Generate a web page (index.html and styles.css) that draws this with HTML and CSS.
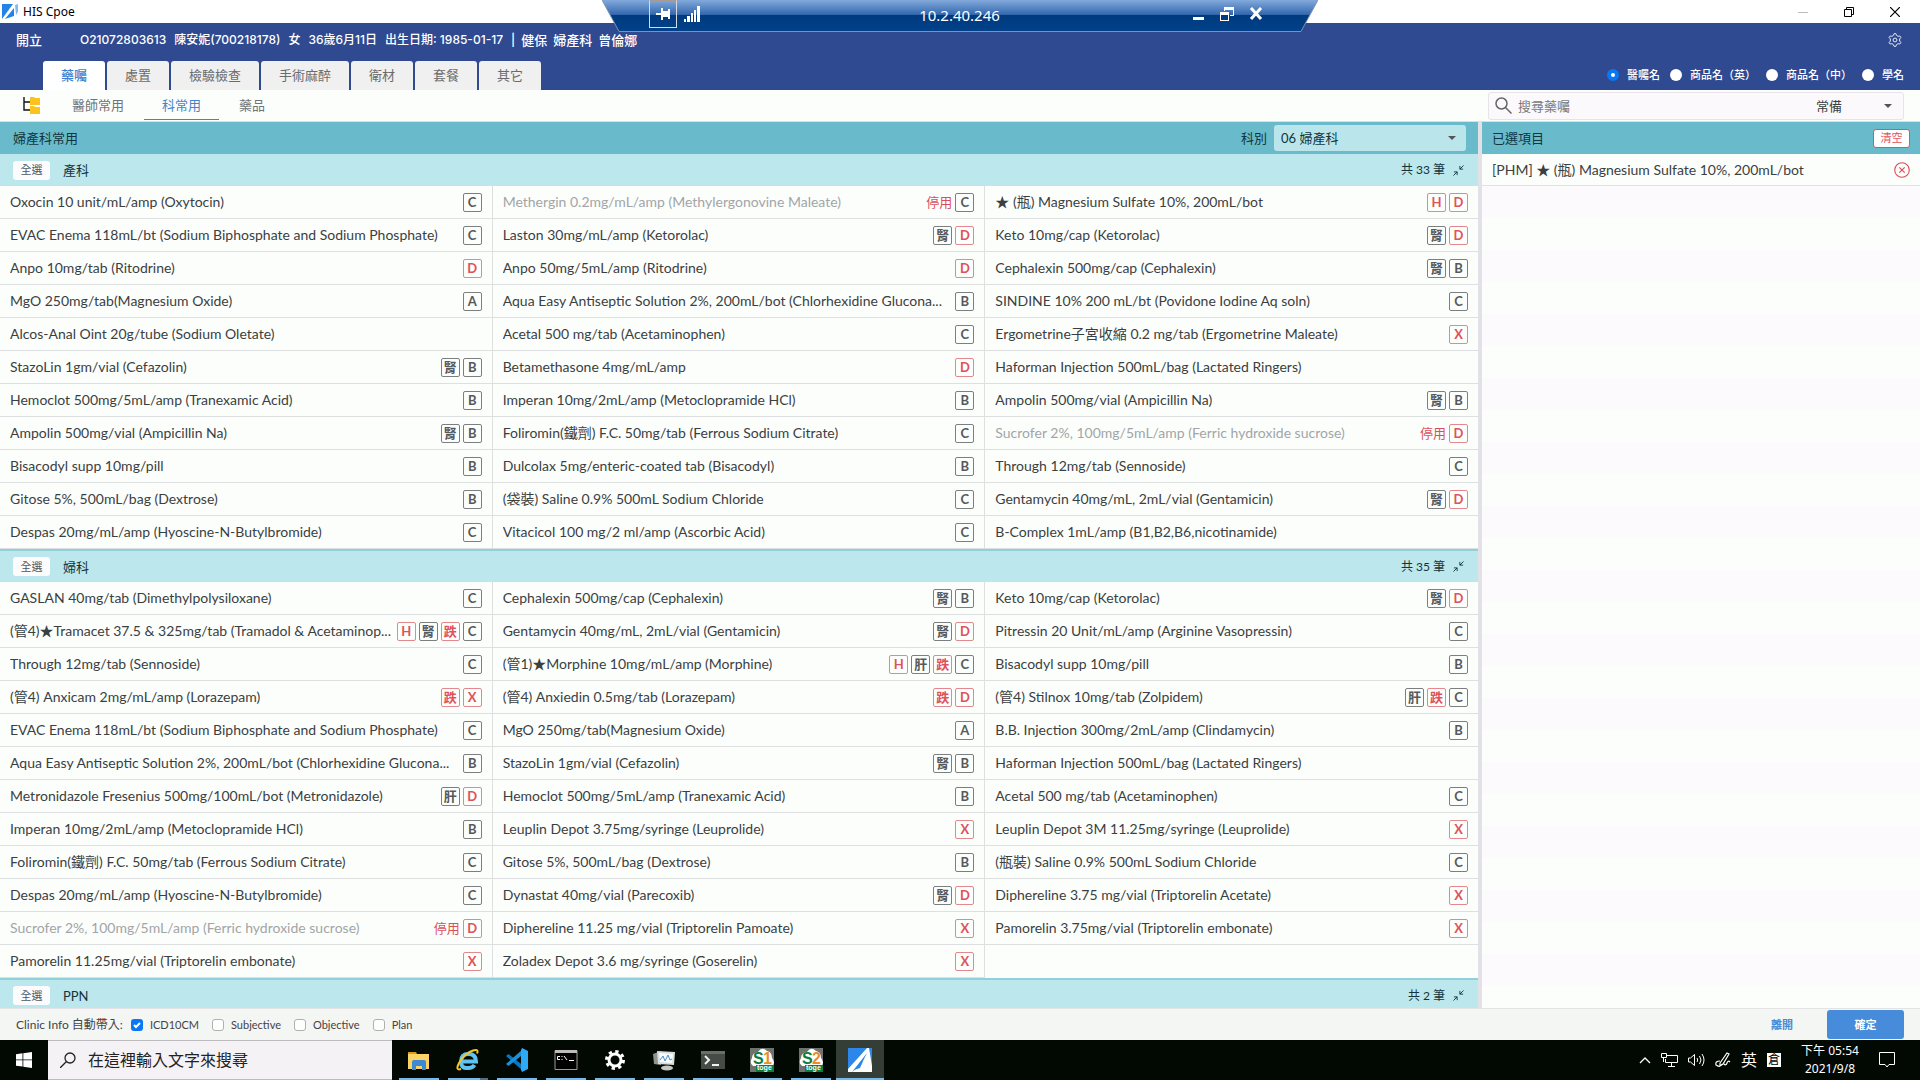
FILE: index.html
```html
<!DOCTYPE html>
<html lang="zh-Hant">
<head>
<meta charset="utf-8">
<title>HIS Cpoe</title>
<link rel="stylesheet" href="styles.css">
</head>
<body>
<div class="titlebar">
  <svg class="app-logo" viewBox="0 0 16 16"><path fill="#2383e8" d="M0 0h11L0 15z"/><path fill="#2383e8" d="M3 15L12 4v8z"/><path fill="#7cbcf5" d="M13 1l3-1v8l-2 3z"/></svg>
  <span class="app-name">HIS Cpoe</span>
  <div class="win-controls">
    <button class="win-btn" aria-label="最小化"><svg viewBox="0 0 10 10"><path stroke="#bbb" d="M0 5.500h10"/></svg></button>
    <button class="win-btn" aria-label="還原"><svg viewBox="0 0 10 10"><path fill="none" stroke="#000" d="M.5 2.500h7v7h-7zM2.500 2.500v-2h7v7h-2"/></svg></button>
    <button class="win-btn" aria-label="關閉"><svg viewBox="0 0 10 10"><path stroke="#000" stroke-width="1.200" d="M0 0l10 10M10 0L0 10"/></svg></button>
  </div>
</div>

<div class="remote-bar">
  <svg class="remote-shape" viewBox="0 0 716 32">
    <defs><linearGradient id="glass" x2="0" y2="1"><stop offset="0" stop-color="#82aadc"/><stop offset=".46" stop-color="#3468ae"/><stop offset=".47" stop-color="#003a7e"/><stop offset="1" stop-color="#00428a"/></linearGradient></defs>
    <path d="M0 0L17 31.500H699L716 0z" fill="url(#glass)"/>
    <path d="M0 0L17 31.500H699L716 0" fill="none" stroke="#7d93b0"/>
  </svg>
  <div class="remote-content">
    <button class="remote-pin" aria-label="釘選"><svg viewBox="0 0 14 14" width="14" height="14"><path fill="#fff" d="M0 6h5V1h2v3h5V2h2v10h-2v-2H7v3H5V8H0z"/></svg></button>
    <svg class="signal" viewBox="0 0 16 16"><path fill="#fff" d="M0 13h2v3H0zM3 10h3v6H3zM7 7h2v9H7zM10 4h2v12h-2zM13 0h3v16h-3z"/></svg>
    <span class="remote-ip">10.2.40.246</span>
    <button class="remote-btn" aria-label="最小化"><svg viewBox="0 0 14 14"><path fill="#fff" d="M2 10h11v3H2z"/></svg></button>
    <button class="remote-btn" aria-label="還原"><svg viewBox="0 0 14 14"><path fill="#fff" d="M4 0h10v9h-4V8h3V3H5v1H4zM0 5h9v9H0zm1 3v5h7V8z" fill-rule="evenodd"/></svg></button>
    <button class="remote-btn" aria-label="關閉"><svg viewBox="0 0 14 14"><path stroke="#fff" stroke-width="3" d="M2 1l10 11M12 1L2 12"/></svg></button>
  </div>
</div>

<header class="header">
  <div class="patient">
    <span class="mode">開立</span>
    <span class="patient-info"><span>O21072803613</span><span>陳安妮(700218178)</span><span>女</span><span>36歲6月11日</span><span>出生日期: 1985-01-17</span><span>|</span><span>健保</span><span>婦產科</span><span>曾倫娜</span></span>
    <button class="gear" aria-label="設定"><svg viewBox="0 0 16 16"><g fill="none" stroke="#e8ecf8" stroke-width="1.100"><path d="M6.300 2.700L6.900.8h2.200l.6 1.900 1.900 1.100 2-.4 1.100 1.900-1.400 1.500v2.400l1.400 1.500-1.100 1.900-2-.4-1.900 1.100-.6 1.900H6.900l-.6-1.900-1.900-1.100-2 .4-1.100-1.900 1.400-1.500V6.800L1.300 5.300l1.100-1.900 2 .4z"/><circle cx="8" cy="8" r="2.200"/></g></svg></button>
  </div>
  <div class="header-tabs">
    <nav class="tabs">
      <a href="#" class="tab active">藥囑</a><a href="#" class="tab">處置</a><a href="#" class="tab">檢驗檢查</a><a href="#" class="tab">手術麻醉</a><a href="#" class="tab">衛材</a><a href="#" class="tab">套餐</a><a href="#" class="tab">其它</a>
    </nav>
    <div class="name-options">
      <label><input type="radio" name="nm" checked>醫囑名</label>
      <label><input type="radio" name="nm">商品名（英）</label>
      <label><input type="radio" name="nm">商品名（中）</label>
      <label><input type="radio" name="nm">學名</label>
    </div>
  </div>
</header>

<div class="subbar">
  <svg class="tree-icon" viewBox="0 0 18 17"><path fill="none" stroke="#111" stroke-width="1.400" d="M1 0v13h6M1 5h6"/><path fill="#fcc21f" d="M7 0h4l1 1h5v7H7zM7 9h4l1 1h5v7H7z"/></svg>
  <nav class="subtabs"><a href="#" class="subtab">醫師常用</a><a href="#" class="subtab active">科常用</a><a href="#" class="subtab">藥品</a></nav>
  <div class="search">
    <svg class="search-icon" viewBox="0 0 17 17"><circle cx="6.500" cy="6.500" r="5.500" fill="none" stroke="#666" stroke-width="1.500"/><path stroke="#666" stroke-width="1.500" d="M10.500 10.500l6 6"/></svg>
    <input class="search-input" type="text" placeholder="搜尋藥囑" aria-label="搜尋藥囑">
    <select class="stock" aria-label="庫別"><option>常備</option></select>
  </div>
</div>

<main class="main">
  <section class="orders">
    <div class="bar">
      <span>婦產科常用</span>
      <div class="dept"><label for="dept">科別</label><select id="dept" class="dept-select"><option>06 婦產科</option></select></div>
    </div>
    <div class="groups" id="groups"></div>
  </section>
  <aside class="selected">
    <div class="bar"><span>已選項目</span><button class="clear">清空</button></div>
    <div class="selected-list">
      <div class="selected-item"><span>[PHM] ★ (瓶) Magnesium Sulfate 10%, 200mL/bot</span>
        <button class="remove" aria-label="移除"><svg viewBox="0 0 16 16"><g fill="none" stroke="#dc4a54" stroke-width="1.100"><circle cx="8" cy="8" r="7.300"/><path d="M5.300 5.300l5.400 5.400M10.700 5.300l-5.400 5.400"/></g></svg></button></div>
    </div>
  </aside>
</main>

<footer class="footer">
  <span>Clinic Info 自動帶入:</span>
  <label><input type="checkbox" checked>ICD10CM</label>
  <label><input type="checkbox">Subjective</label>
  <label><input type="checkbox">Objective</label>
  <label><input type="checkbox">Plan</label>
  <div class="actions"><button class="leave">離開</button><button class="confirm">確定</button></div>
</footer>

<div class="taskbar">
  <button class="start" aria-label="開始"><svg viewBox="0 0 16 16"><path fill="#fff" d="M0 2.200l6.500-.9v6.200H0zM7.300 1.200L16 0v7.500H7.300zM0 8.300h6.500v6.200L0 13.700zM7.300 8.300H16V16l-8.700-1.300z"/></svg></button>
  <label class="task-search"><svg viewBox="0 0 16 16"><circle cx="10" cy="6" r="5" fill="none" stroke="#222" stroke-width="1.300"/><path stroke="#222" stroke-width="1.300" d="M6.500 9.500L0 16"/></svg><input type="text" placeholder="在這裡輸入文字來搜尋" aria-label="在這裡輸入文字來搜尋"></label>
  <div class="apps">
    <button class="app" aria-label="檔案總管"><svg viewBox="0 0 24 24"><path fill="#d99a1f" d="M1 4h8l1 2h11v3H1z"/><path fill="#fbd265" d="M1 6h21v15H1z"/><path fill="#3b8ad2" d="M5 14q0-2 2-2h10q2 0 2 2v8h-4v-4H9v4H5z"/></svg></button>
    <button class="app split" aria-label="Internet Explorer"><svg viewBox="0 0 24 24"><path fill="none" stroke="#5ec5f2" stroke-width="4" d="M5 13.500h15Q20 6 12.500 6T5 13.500 12.500 20q4 0 6-3"/><path fill="none" stroke="#f5c52a" stroke-width="2" d="M5 21Q-1 23 3 15 9 5 17 2.500q6-2 4 3"/></svg></button>
    <button class="app" aria-label="Visual Studio Code"><svg viewBox="0 0 24 24"><path fill="#0b75bd" d="M1 8l2.500-2L18 17.500V23z"/><path fill="#1a8fdc" d="M1 16l2.500 2L18 6.500V1z"/><path fill="#2fa8f5" d="M17 0l6 3v18l-6 3-1-2V2z"/></svg></button>
    <button class="app" aria-label="命令提示字元"><svg viewBox="0 0 24 24"><path fill="#000" stroke="#999" d="M1 2.500h22v19H1z"/><path fill="#bbb" d="M1 2h22v3H1z"/><path fill="none" stroke="#fff" d="M6 8.500H3.500v3H6M8 8v1m0 2v1M10 8l3 4M15 12.500h5"/></svg></button>
    <button class="app" aria-label="設定"><svg viewBox="0 0 24 24"><circle cx="12" cy="12" r="6" fill="none" stroke="#fff" stroke-width="3"/><circle cx="12" cy="12" r="8.500" fill="none" stroke="#fff" stroke-width="3" stroke-dasharray="3.300 3.376"/></svg></button>
    <button class="app" aria-label="監視器"><svg viewBox="0 0 24 24"><path fill="#8d938f" d="M1 6l8-3v14l-7-1z"/><path fill="#d9dedb" d="M5 3l18 1-1 13-16-1z"/><path fill="#f7fbfd" d="M7 5l14 1-1 9-12-1z"/><path fill="none" stroke="#4a8ec4" d="M8 12l3-4 2 5 3-6 2 5 2-1"/><ellipse cx="15" cy="20" rx="6" ry="2.500" fill="#c4c9c6"/></svg></button>
    <button class="app" aria-label="終端機"><svg viewBox="0 0 24 24"><path fill="#474b48" d="M0 3h24v18H0z"/><path fill="#6a6e6b" d="M0 3h24v3H0z"/><path fill="none" stroke="#f0f0f0" stroke-width="2" d="M4 8l4 4-4 4M11 17h7"/></svg></button>
    <button class="app" aria-label="S1 toge"><svg viewBox="0 0 24 24"><path fill="#6f7370" d="M0 0h24v24H0z"/><path fill="#fff" d="M3 18q-4-3-1-8 0-5 6-6 4-6 9-1 5 1 5 7 4 5 0 8z"/><text x="3" y="16" class="s-letter">S</text><text x="13" y="16" class="s-digit">1</text><path fill="#0b7d3e" d="M6 17h18v7H6z"/><text x="7" y="22" class="s-word">toge</text></svg></button>
    <button class="app" aria-label="S2 toge"><svg viewBox="0 0 24 24"><path fill="#6f7370" d="M0 0h24v24H0z"/><path fill="#fff" d="M3 18q-4-3-1-8 0-5 6-6 4-6 9-1 5 1 5 7 4 5 0 8z"/><text x="3" y="16" class="s-letter">S</text><text x="13" y="16" class="s-digit">2</text><path fill="#0b7d3e" d="M6 17h18v7H6z"/><text x="7" y="22" class="s-word">toge</text></svg></button>
    <button class="app current" aria-label="HIS Cpoe"><svg viewBox="0 0 24 24"><path fill="#2d86ea" d="M0 0h24v24H0z"/><path fill="#fff" d="M19 0L0 21v3h4L19 5l-6 12-9 7h20V18L21 0z"/><path fill="#2d86ea" d="M22 0h2v14zM6 22l9-9-3 7z"/></svg></button>
  </div>
  <div class="tray">
    <svg viewBox="0 0 12 16" width="12" height="16"><path fill="none" stroke="#fff" stroke-width="1.300" d="M1 11l5-5 5 5"/></svg>
    <svg viewBox="0 0 17 16" width="17" height="16"><path fill="none" stroke="#fff" d="M6 3.500h10.500v7H4.500V7M7 14.500h7M10.500 11v3M.5 1.500h5v4h-5zM2.500 6v4"/></svg>
    <svg viewBox="0 0 17 16" width="17" height="16"><path fill="none" stroke="#fff" d="M.5 6h2l4-3.500v11L2.500 10h-2zM9 6q1.500 2 0 4M11.500 4q3 4 0 8M14 2q4 6 0 12"/></svg>
    <svg viewBox="0 0 16 16" width="16" height="16"><path fill="none" stroke="#fff" stroke-width="1.200" d="M5 11L12 1l2 1-6 10-3 2zM5 9q-5 0-4 4 4 3 6-1M9 12q2 2 3-1t3-1"/></svg>
    <span class="ime">英</span>
    <span class="ime-mode">倉</span>
    <div class="clock"><span>下午 05:54</span><span>2021/9/8</span></div>
    <svg viewBox="0 0 16 16" width="16" height="16"><path fill="none" stroke="#fff" d="M.5.5h15v12H10L8 15l-2-2.500H.5z"/></svg>
  </div>
</div>
<script src="script.js"></script>
</body>
</html>
```
FILE: script.js
```js
// Each entry: "name|tags". Tags: A B C D X = pregnancy class, H = high alert, 停用 = discontinued.
const groups = [
  { name: "產科", count: 33, items: [
    "Oxocin 10 unit/mL/amp (Oxytocin)|C",
    "Methergin 0.2mg/mL/amp (Methylergonovine Maleate)|停用 C",
    "★ (瓶) Magnesium Sulfate 10%, 200mL/bot|H D",
    "EVAC Enema 118mL/bt (Sodium Biphosphate and Sodium Phosphate)|C",
    "Laston 30mg/mL/amp (Ketorolac)|腎 D",
    "Keto 10mg/cap (Ketorolac)|腎 D",
    "Anpo 10mg/tab (Ritodrine)|D",
    "Anpo 50mg/5mL/amp (Ritodrine)|D",
    "Cephalexin 500mg/cap (Cephalexin)|腎 B",
    "MgO 250mg/tab(Magnesium Oxide)|A",
    "Aqua Easy Antiseptic Solution 2%, 200mL/bot (Chlorhexidine Glucona...|B",
    "SINDINE 10% 200 mL/bt (Povidone Iodine Aq soln)|C",
    "Alcos-Anal Oint 20g/tube (Sodium Oletate)|",
    "Acetal 500 mg/tab (Acetaminophen)|C",
    "Ergometrine子宮收縮 0.2 mg/tab (Ergometrine Maleate)|X",
    "StazoLin 1gm/vial (Cefazolin)|腎 B",
    "Betamethasone 4mg/mL/amp|D",
    "Haforman Injection 500mL/bag (Lactated Ringers)|",
    "Hemoclot 500mg/5mL/amp (Tranexamic Acid)|B",
    "Imperan 10mg/2mL/amp (Metoclopramide HCl)|B",
    "Ampolin 500mg/vial (Ampicillin Na)|腎 B",
    "Ampolin 500mg/vial (Ampicillin Na)|腎 B",
    "Foliromin(鐵劑) F.C. 50mg/tab (Ferrous Sodium Citrate)|C",
    "Sucrofer 2%, 100mg/5mL/amp (Ferric hydroxide sucrose)|停用 D",
    "Bisacodyl supp 10mg/pill|B",
    "Dulcolax 5mg/enteric-coated tab (Bisacodyl)|B",
    "Through 12mg/tab (Sennoside)|C",
    "Gitose 5%, 500mL/bag (Dextrose)|B",
    "(袋裝) Saline 0.9% 500mL Sodium Chloride|C",
    "Gentamycin 40mg/mL, 2mL/vial (Gentamicin)|腎 D",
    "Despas 20mg/mL/amp (Hyoscine-N-Butylbromide)|C",
    "Vitacicol 100 mg/2 ml/amp (Ascorbic Acid)|C",
    "B-Complex 1mL/amp (B1,B2,B6,nicotinamide)|"
  ]},
  { name: "婦科", count: 35, items: [
    "GASLAN 40mg/tab (Dimethylpolysiloxane)|C",
    "Cephalexin 500mg/cap (Cephalexin)|腎 B",
    "Keto 10mg/cap (Ketorolac)|腎 D",
    "(管4)★Tramacet 37.5 & 325mg/tab (Tramadol & Acetaminop...|H 腎 跌 C",
    "Gentamycin 40mg/mL, 2mL/vial (Gentamicin)|腎 D",
    "Pitressin 20 Unit/mL/amp (Arginine Vasopressin)|C",
    "Through 12mg/tab (Sennoside)|C",
    "(管1)★Morphine 10mg/mL/amp (Morphine)|H 肝 跌 C",
    "Bisacodyl supp 10mg/pill|B",
    "(管4) Anxicam 2mg/mL/amp (Lorazepam)|跌 X",
    "(管4) Anxiedin 0.5mg/tab (Lorazepam)|跌 D",
    "(管4) Stilnox 10mg/tab (Zolpidem)|肝 跌 C",
    "EVAC Enema 118mL/bt (Sodium Biphosphate and Sodium Phosphate)|C",
    "MgO 250mg/tab(Magnesium Oxide)|A",
    "B.B. Injection 300mg/2mL/amp (Clindamycin)|B",
    "Aqua Easy Antiseptic Solution 2%, 200mL/bot (Chlorhexidine Glucona...|B",
    "StazoLin 1gm/vial (Cefazolin)|腎 B",
    "Haforman Injection 500mL/bag (Lactated Ringers)|",
    "Metronidazole Fresenius 500mg/100mL/bot (Metronidazole)|肝 D",
    "Hemoclot 500mg/5mL/amp (Tranexamic Acid)|B",
    "Acetal 500 mg/tab (Acetaminophen)|C",
    "Imperan 10mg/2mL/amp (Metoclopramide HCl)|B",
    "Leuplin Depot 3.75mg/syringe (Leuprolide)|X",
    "Leuplin Depot 3M 11.25mg/syringe (Leuprolide)|X",
    "Foliromin(鐵劑) F.C. 50mg/tab (Ferrous Sodium Citrate)|C",
    "Gitose 5%, 500mL/bag (Dextrose)|B",
    "(瓶裝) Saline 0.9% 500mL Sodium Chloride|C",
    "Despas 20mg/mL/amp (Hyoscine-N-Butylbromide)|C",
    "Dynastat 40mg/vial (Parecoxib)|腎 D",
    "Diphereline 3.75 mg/vial (Triptorelin Acetate)|X",
    "Sucrofer 2%, 100mg/5mL/amp (Ferric hydroxide sucrose)|停用 D",
    "Diphereline 11.25 mg/vial (Triptorelin Pamoate)|X",
    "Pamorelin 3.75mg/vial (Triptorelin embonate)|X",
    "Pamorelin 11.25mg/vial (Triptorelin embonate)|X",
    "Zoladex Depot 3.6 mg/syringe (Goserelin)|X"
  ]},
  { name: "PPN", count: 2, items: [] }
];

const warning = new Set(["D", "X", "H", "跌"]);
const esc = s => s.replace(/&/g, "&amp;");

function tag(t) {
  if (t === "停用") return '<span class="stopped">停用</span>';
  return `<span class="tag${warning.has(t) ? " warn" : ""}">${t}</span>`;
}

function item(entry) {
  const [name, tags] = entry.split("|");
  const list = tags ? tags.split(" ") : [];
  const off = list.includes("停用") ? " off" : "";
  return `<li class="drug${off}"><span class="drug-name">${esc(name)}</span>${list.map(tag).join("")}</li>`;
}

const collapseIcon = '<svg viewBox="0 0 12 12"><path fill="none" stroke="#12343c" d="M11.500.5l-4 4M7.500 1v3.500H11M.5 11.500l4-4M1 7.500h3.500V11"/></svg>';

document.getElementById("groups").innerHTML = groups.map(g => `
  <section class="group">
    <div class="group-head">
      <button class="pick-all">全選</button><h2>${g.name}</h2>
      <span class="count">共 ${g.count} 筆</span><button class="collapse" aria-label="收合">${collapseIcon}</button>
    </div>
    <ul class="drugs">${g.items.map(item).join("")}</ul>
  </section>`).join("");
```
FILE: styles.css
```css
* { box-sizing: border-box; }
body {
  margin: 0;
  height: 100vh;
  display: flex;
  flex-direction: column;
  overflow: hidden;
  font: 13px/18px Lato, "Noto Sans CJK TC", sans-serif;
  color: #3a3f42;
  background: #fcfefc;
}
button, input, select { font: inherit; color: inherit; margin: 0; padding: 0; }
button { border: 0; background: none; display: flex; align-items: center; justify-content: center; }
a { color: inherit; text-decoration: none; }
svg { display: block; flex: none; }

.titlebar { flex: none; height: 23px; display: flex; align-items: center; gap: 5px; padding-left: 2px; color: #000; background: #fff; }
.app-logo { width: 16px; height: 16px; }
.app-name { font: 12px/18px "Noto Sans", sans-serif; }
.win-controls { margin-left: auto; display: flex; padding-right: 2px; }
.win-btn { width: 46px; height: 20px; }
.win-btn svg { width: 10px; height: 10px; }

.remote-bar { position: absolute; top: 0; left: 50%; width: 716px; height: 32px; transform: translateX(-50%); color: #fff; }
.remote-shape { position: absolute; top: 0; left: 0; width: 100%; height: 100%; }
.remote-content { position: relative; height: 100%; display: flex; align-items: center; padding: 0 48px 4px 47px; }
.remote-pin { width: 28px; height: 28px; border: 1px solid #d5dbe6; border-top-color: #a89a94; }
.signal { width: 16px; height: 16px; margin-left: 7px; }
.remote-ip { flex: 1; padding: 2px 0 0 36px; text-align: center; font: 15px/20px "Noto Sans", sans-serif; }
.remote-btn { width: 29px; height: 28px; }
.remote-btn svg { width: 14px; height: 14px; }

.header { flex: none; height: 67px; display: flex; flex-direction: column; justify-content: space-between; background: #2f4a91; color: #fff; }
.patient { height: 34px; display: flex; align-items: center; padding: 0 18px 0 16px; font-weight: 500; }
.mode { width: 64px; }
.patient-info { display: flex; gap: 6px; font-family: Inter, "Noto Sans CJK TC", sans-serif; font-size: 12px; }
.patient-info span:nth-child(-n+5) { margin-right: 2px; }
.patient-info span:nth-last-child(-n+3) { font-size: 13px; }
.gear { margin-left: auto; width: 14px; height: 14px; }
.gear svg { width: 14px; height: 14px; }
.header-tabs { display: flex; justify-content: space-between; padding: 0 16px 0 43px; }
.tabs { display: flex; gap: 2px; }
.tab { height: 29px; padding: 0 18px; line-height: 28px; border-radius: 3px 3px 0 0; background: #eff0ef; color: #6b6b6b; }
.tab.active { background: #fff; color: #3c82d0; font-weight: 500; }
.name-options { display: flex; align-items: center; gap: 10px; padding-bottom: 2px; font-size: 11px; font-weight: 500; }
.name-options label { display: flex; align-items: center; gap: 8px; }
.name-options input { appearance: none; width: 12px; height: 12px; border-radius: 50%; background: #fff; }
.name-options input:checked { border: 4px solid #0a78f5; }

.subbar { flex: none; height: 32px; display: flex; align-items: center; padding: 0 16px 0 23px; border-bottom: 1px solid #dedee2; background: #fcfefc; }
.tree-icon { width: 18px; height: 17px; }
.subtabs { display: flex; align-self: stretch; gap: 2px; margin-left: 13px; color: #707478; }
.subtab { height: 30px; padding: 0 18px; line-height: 30px; border-bottom: 1px solid transparent; }
.subtab.active { color: #4384cc; border-color: #4384cc; }
.search { margin-left: auto; width: 416px; height: 28px; display: flex; align-items: center; padding: 0 8px 0 6px; border: 1px solid #e6e4e9; border-radius: 3px; background: #fbf9fc; }
.search-icon { width: 17px; height: 17px; }
.search-input { flex: 1; min-width: 0; padding-left: 6px; border: 0; background: none; outline: 0; }
.search-input::placeholder { color: #7a7a7a; opacity: 1; }
select {
  appearance: none;
  border: 0;
  background: url("data:image/svg+xml,%3Csvg xmlns='http://www.w3.org/2000/svg' viewBox='0 0 8 4'%3E%3Cpath fill='%23555' d='M0 0h8L4 4z'/%3E%3C/svg%3E") no-repeat right 3px center / 8px 4px;
}
.stock { width: 79px; height: 26px; }

.main { flex: 1; min-height: 0; display: flex; }
.orders { flex: 1; min-width: 0; display: flex; flex-direction: column; border-right: 4px solid #e2e1e5; }
.bar { flex: none; height: 32px; display: flex; align-items: center; justify-content: space-between; padding: 0 12px 0 13px; background: #69bbcb; color: #12343c; }
.dept { display: flex; align-items: center; gap: 7px; }
.dept-select { width: 192px; height: 26px; padding-left: 7px; border-radius: 3px; background-color: #bae6eb; background-position: right 10px center; }
.groups { flex: 1; min-height: 0; overflow: hidden; }
.group-head { height: 32px; display: flex; align-items: center; padding: 0 14px 0 13px; background: #bce7ec; color: #12343c; }
.group + .group .group-head { height: 33px; border-top: 2px solid #8fd0da; }
.pick-all { width: 37px; height: 19px; border-radius: 3px; background: #fcfcfe; color: #50555a; font-size: 11px; }
h2 { margin: 0 auto 0 13px; font: inherit; }
.count { font-size: 12px; }
.collapse { width: 12px; height: 12px; margin-left: 7px; }
.collapse svg { width: 11px; height: 11px; }
.drugs { list-style: none; margin: 0; padding: 0; display: grid; grid-template-columns: repeat(3, minmax(0, 1fr)); }
.drug { height: 33px; display: flex; align-items: center; gap: 3px; padding: 0 10px; border-right: 1px solid #dedfe0; border-bottom: 1px solid #dedfe0; }
.drug:nth-child(3n) { border-right: 0; }
.drug-name { flex: 1; min-width: 0; overflow: hidden; text-overflow: ellipsis; white-space: nowrap; font-size: 14px; }
.off .drug-name { color: #a2a5a7; }
.tag { flex: none; width: 19px; height: 19px; border: 1px solid #7c7f80; border-radius: 2px; text-align: center; font-size: 13px; line-height: 17px; font-weight: 700; color: #55595b; }
.warn { color: #e0525a; border-color: #e3888e; }
.stopped { flex: none; color: #d9505b; }

.selected { flex: none; width: 438px; display: flex; flex-direction: column; }
.selected .bar { padding: 0 10px; }
.clear { width: 37px; height: 19px; border: 1px solid #e0525a; border-radius: 3px; background: #fff; color: #e0525a; font-size: 11px; }
.selected-list { flex: 1; background: repeating-linear-gradient(#fcfefc 0 32px, #fcfafd 32px 64px); }
.selected-item { height: 32px; display: flex; align-items: center; justify-content: space-between; padding: 0 10px; border-bottom: 1px solid #e2e1e5; background: #fcfefc; font-size: 14px; }
.remove, .remove svg { width: 16px; height: 16px; }

.footer { flex: none; height: 32px; display: flex; align-items: center; gap: 13px; padding: 0 16px; border-top: 1px solid #e3e2e4; background: #f4f6f4; font-size: 11px; color: #444; }
.footer > span { margin-right: -5px; font-size: 12px; }
.footer label { display: flex; align-items: center; gap: 7px; }
.footer input { width: 12px; height: 12px; appearance: none; border: 1px solid #b0b0b0; border-radius: 3px; background: #fff; }
.footer input:checked { border: 0; background: #0a78f5 url("data:image/svg+xml,%3Csvg xmlns='http://www.w3.org/2000/svg' viewBox='0 0 12 12'%3E%3Cpath fill='none' stroke='white' stroke-width='2' d='M3 6l2 2 4-4'/%3E%3C/svg%3E"); }
.actions { margin-left: auto; display: flex; gap: 13px; font-weight: 700; }
.leave { width: 64px; color: #4a8ad4; }
.confirm { width: 77px; height: 29px; border-radius: 3px; background: #478bdb; color: #fff; }

.taskbar { flex: none; height: 40px; display: flex; background: #020902; color: #fff; }
.start { width: 48px; }
.start svg { width: 16px; height: 16px; }
.task-search { width: 344px; display: flex; align-items: center; gap: 12px; padding: 0 12px; background: #f5f2f6; border: 1px solid #bdbabd; border-width: 1px 0; }
.task-search svg { width: 16px; height: 16px; }
.task-search input { flex: 1; min-width: 0; border: 0; background: none; font-size: 16px; }
.task-search input::placeholder { color: #222; opacity: 1; }
.apps { display: flex; gap: 1px; padding-left: 3px; }
.app { width: 48px; background: linear-gradient(#76b9ed, #76b9ed) no-repeat center bottom / 40px 2px; }
.split { background-image: linear-gradient(90deg, #76b9ed 80%, #4a708c 80%); }
.app svg { width: 24px; height: 24px; }
.app.current { background-color: #343e37; background-size: 100% 2px; }
.s-letter { font: bold 16px "Liberation Sans", sans-serif; fill: #0b7d3e; }
.s-digit { font: bold 16px "Liberation Sans", sans-serif; fill: #f08c1e; }
.s-word { font: bold 7px "Liberation Sans", sans-serif; fill: #fff; }
.tray { margin-left: auto; display: flex; align-items: center; gap: 10px; padding-right: 25px; }
.ime { font-size: 16px; }
.ime-mode { width: 14px; height: 14px; background: #fff; color: #000; font-size: 12px; line-height: 13px; text-align: center; }
.clock { width: 78px; display: flex; flex-direction: column; text-align: center; font: 12px/18px "Noto Sans", "Noto Sans CJK TC", sans-serif; }
```
